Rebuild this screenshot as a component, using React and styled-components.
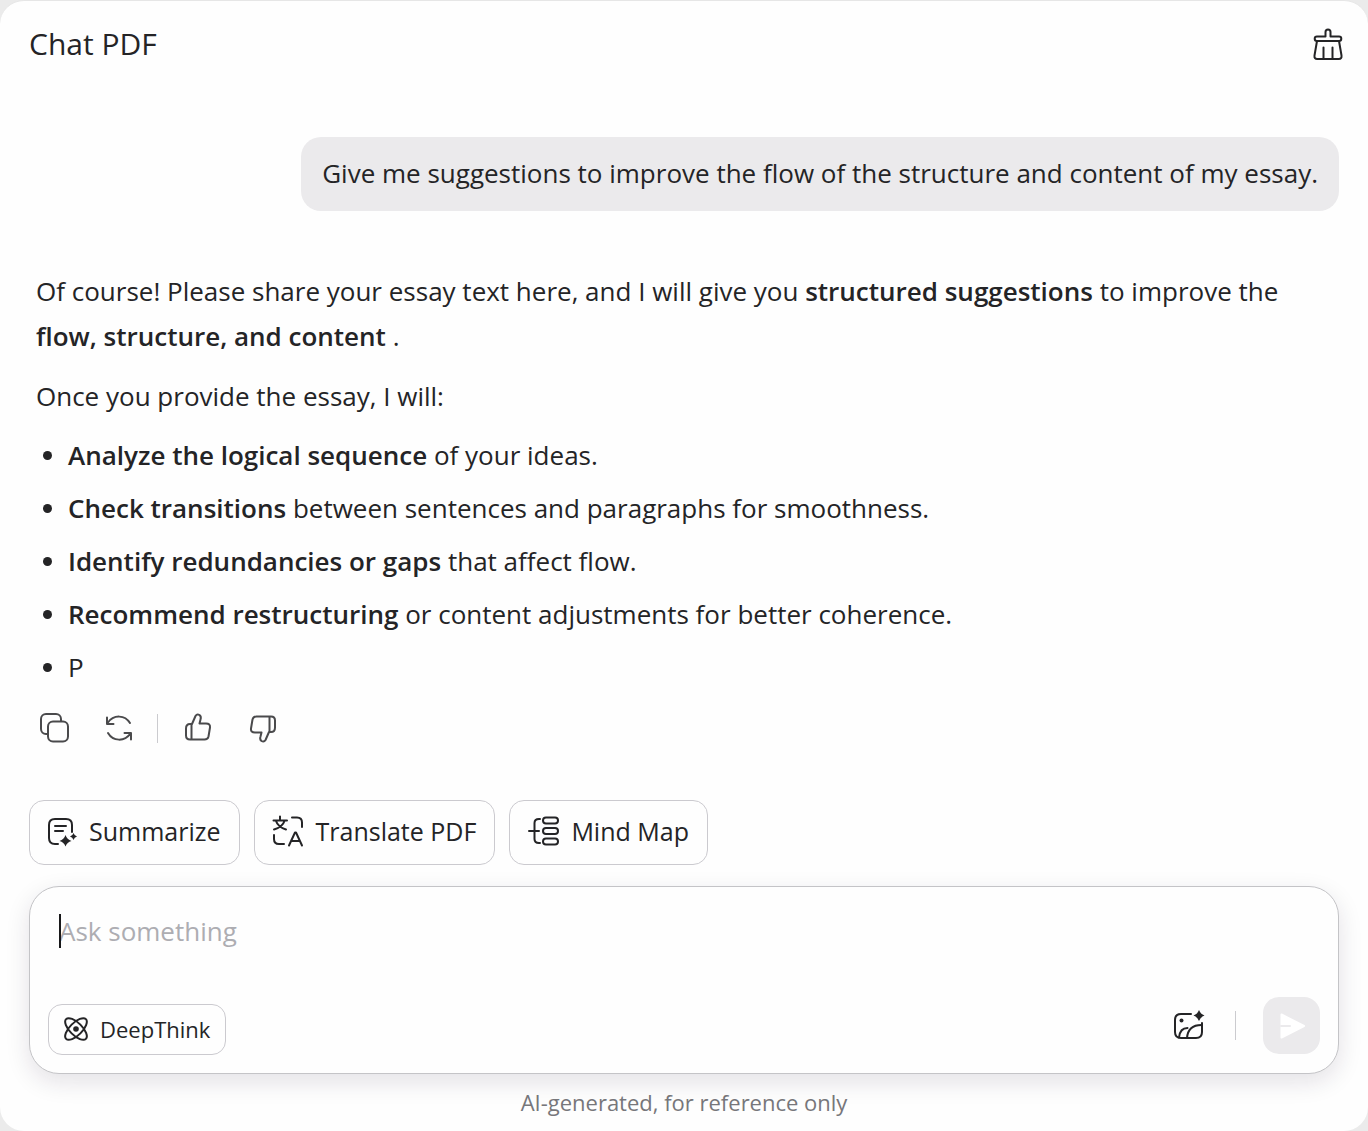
import React, { useState } from "react";
import styled, { createGlobalStyle } from "styled-components";

const GlobalStyle = createGlobalStyle`
  * {
    box-sizing: border-box;
  }
  body {
    margin: 0;
    background: #ebebeb;
    color: #242426;
    font-family: "Open Sans", "Noto Sans", sans-serif;
  }
  button, textarea {
    font-family: inherit;
    color: inherit;
  }
`;

/**
 * Panel
 */
const Panel = styled.div`
  display: flex;
  flex-direction: column;
  min-height: 100vh;
  padding: 0 29px;
  background: #fefefe;
  border-top: 1px solid #e6e6e6;
  border-radius: 24px;
`;

const Header = styled.header`
  display: flex;
  align-items: center;
  justify-content: space-between;
  height: 86px;
  margin-right: -5px;
`;

const Title = styled.h1`
  margin: 0;
  font-size: 30px;
  font-weight: 400;
  line-height: 40px;
`;

const IconButton = styled.button`
  display: flex;
  align-items: center;
  justify-content: center;
  width: 32px;
  height: 32px;
  padding: 0;
  border: none;
  background: none;
  color: ${(props) => props.$color || "#4a4a4c"};
  cursor: pointer;
`;

/**
 * Conversation
 */
const Messages = styled.main`
  display: flex;
  flex: 1;
  flex-direction: column;
`;

const Question = styled.div`
  align-self: flex-end;
  margin-top: 50px;
  padding: 14px 21px 16px;
  border-radius: 20px;
  background: #ebeaec;
  font-size: 26px;
  line-height: 44px;
`;

const Answer = styled.div`
  margin-top: 58px;
  padding: 0 7px;
  font-size: 26px;
  line-height: 45px;
  p {
    margin: 0 0 15px;
  }
  strong {
    font-weight: 650;
  }
`;

const Points = styled.ul`
  display: flex;
  flex-direction: column;
  gap: 8px;
  margin: -1px 0 0;
  padding: 0;
  list-style: none;
`;

const Point = styled.li`
  display: flex;
  align-items: center;
  gap: 16px;
  &::before {
    content: "";
    width: 9px;
    height: 9px;
    margin-left: 7px;
    border-radius: 50%;
    background: #242426;
  }
`;

const Feedback = styled.div`
  display: flex;
  align-items: center;
  gap: 33px;
  margin-top: 22px;
  padding-left: 9px;
`;

const FeedbackGroup = styled.div`
  display: flex;
  gap: 33px;
`;

const Divider = styled.span`
  width: 1px;
  height: 29px;
  background: #cbcbcf;
  margin: ${(props) => props.$margin || "0"};
`;

/**
 * Composer
 */
const Actions = styled.div`
  display: flex;
  flex-wrap: wrap;
  gap: 14px;
`;

const ActionButton = styled.button`
  display: flex;
  align-items: center;
  gap: 12px;
  height: 65px;
  padding: 0 18px 3px 17px;
  border: 1px solid #cbcacf;
  border-radius: 15px;
  background: #fefefe;
  font-size: 25px;
  cursor: pointer;
`;

const Composer = styled.form`
  position: relative;
  display: flex;
  flex-direction: column;
  justify-content: space-between;
  min-height: 188px;
  margin-top: 21px;
  padding: 21px 18px 18px;
  border: 1px solid #c4c4c7;
  border-radius: 30px;
  background: #fefefe;
  box-shadow: 0 8px 24px rgba(30, 20, 50, 0.12);
`;

const Prompt = styled.textarea`
  height: 46px;
  margin: 0 11px;
  padding: 0;
  border: none;
  outline: none;
  resize: none;
  background: none;
  font-size: 26px;
  line-height: 46px;
  caret-color: transparent;
  &::placeholder {
    color: #adadb2;
    opacity: 1;
  }
`;

const Caret = styled.span`
  position: absolute;
  top: 27px;
  left: 29px;
  width: 2px;
  height: 34px;
  background: #18181a;
`;

const Tools = styled.div`
  display: flex;
  align-items: flex-end;
  justify-content: space-between;
`;

const ToolGroup = styled.div`
  display: flex;
  align-items: center;
  padding-bottom: 1px;
`;

const DeepThinkButton = styled.button`
  display: flex;
  align-items: center;
  gap: 12px;
  height: 51px;
  padding: 0 15px 2px;
  border: 1px solid #cbcacf;
  border-radius: 14px;
  background: #fefefe;
  font-size: 22px;
  cursor: pointer;
`;

const SendButton = styled.button`
  display: flex;
  align-items: center;
  justify-content: center;
  width: 57px;
  height: 57px;
  padding: 0;
  border: none;
  border-radius: 16px;
  background: #ebeaec;
`;

const Note = styled.footer`
  padding: 12px 0 13px;
  color: #77777b;
  font-size: 22px;
  line-height: 32px;
  text-align: center;
`;

/**
 * Icons
 */
const Icon = ({ size = 32, stroke = 2, children }) => (
  <svg
    width={size}
    height={size}
    viewBox={`0 0 ${size} ${size}`}
    fill="none"
    stroke="currentColor"
    strokeWidth={stroke}
    strokeLinecap="round"
    strokeLinejoin="round"
    overflow="visible"
    aria-hidden="true"
  >
    {children}
  </svg>
);

const BroomIcon = () => (
  <Icon>
    <path d="M13.500 8.500V4a2.500 2.500 0 0 1 5 0v4.500H27a2.300 2.300 0 0 1 0 4.600H5a2.300 2.300 0 0 1 0-4.600z" />
    <path d="M5 13 2.500 27.500q-.4 3.500 2.700 3.500h21.600q3.100 0 2.700-3.500L27 13" />
    <path d="M11.500 19.500v11M20.500 19.500v11" />
  </Icon>
);

const CopyIcon = () => (
  <Icon>
    <path d="M9 22H8a5 5 0 0 1-5-5V7a5 5 0 0 1 5-5h10a5 5 0 0 1 5 5v2" />
    <rect x="10" y="9.500" width="20" height="20" rx="5" />
  </Icon>
);

const RefreshIcon = () => (
  <Icon>
    <path d="M27 11C22 3 11 2 4.500 11M4 5.500V12h6.500" />
    <path d="M5 21C10 29.500 21.500 30 27.500 21.500M28 27.500V21h-6.500" />
  </Icon>
);

const LikeIcon = () => (
  <Icon>
    <path d="M9 12h1l3.500-8Q15 1.500 17.500 3q2 1.500 1 4.500l-1 4H24q4.500 0 4 4l-1.500 9q-.7 3-4 3H8q-4 0-4-4v-7Q4 12 8 12zM9.500 12.500V27" />
  </Icon>
);

const DislikeIcon = () => (
  <Icon>
    <path d="M23 20h-1l-3.500 8q-1.500 2.500-4 1-2-1.500-1-4.500l1-4H8q-4.500 0-4-4l1.500-9q.7-3 4-3H24q4 0 4 4v7q0 4.500-4 4.500zM22.500 19.500V5" />
  </Icon>
);

const SummarizeIcon = () => (
  <Icon size={30}>
    <path d="M11 28H8q-6 0-6-6V9q0-6 6-6h11q6 0 6 6v7M8 10h11M8 15h8" />
    <path
      d="M18.500 19q1.500 4.500 6 6-4.500 1-6 5.500-1.500-4.500-6-5.500 4.500-1.500 6-6zM26.500 17q.8 2.700 3.500 3.500-2.700.8-3.500 3.500-.8-2.700-3.500-3.500 2.700-.8 3.500-3.500z"
      fill="currentColor"
      strokeWidth="0"
    />
  </Icon>
);

const TranslateIcon = () => (
  <Icon size={32}>
    <path d="M8 1.500V5M1.500 5.500h13.500M4 6q2 6 10 8.500M12.500 6q-2 6-10.500 8.500" />
    <path d="M20 2.500h5q5 0 5 5V12M2 20v4q0 5 5 5h5M17 30.500l6-13h1l6 13M19.500 26h8" />
  </Icon>
);

const MindMapIcon = () => (
  <Icon size={32}>
    <path d="M2 16h10M13 4h-1q-4.500 0-4.500 4v16q0 4 4.500 4h1" />
    <rect x="16" y="2.500" width="15" height="6" rx="3" />
    <rect x="16" y="13" width="15" height="6" rx="3" />
    <rect x="16" y="23.500" width="15" height="6" rx="3" />
  </Icon>
);

const AtomIcon = () => (
  <Icon size={24}>
    <ellipse cx="12" cy="12" rx="14" ry="6.200" transform="rotate(45 12 12)" />
    <ellipse cx="12" cy="12" rx="14" ry="6.200" transform="rotate(-45 12 12)" />
    <circle cx="12" cy="12" r="2.800" fill="currentColor" stroke="none" />
  </Icon>
);

const ImageIcon = () => (
  <Icon>
    <path d="M18 4H8Q2 4 2 10v12q0 6 6 6h15q6 0 6-6V13" />
    <path d="M6 27.500q1-9.500 8.500-9.500M14 28q1-13 14.500-13" />
    <circle cx="8.500" cy="10.500" r="2" fill="currentColor" stroke="none" />
    <path
      d="M26 0q1.500 4 5.500 5.500-4 1.500-5.500 5.500-1.500-4-5.500-5.500 4-1.500 5.500-5.500z"
      fill="currentColor"
      stroke="none"
    />
  </Icon>
);

const SendIcon = () => (
  <Icon size={30}>
    <path d="M4.500 3.500 27 15 4.500 26.500V17z" fill="#fff" stroke="#fff" />
    <path d="M4 15h9" stroke="#ebeaec" />
  </Icon>
);

const points = [
  { lead: "Analyze the logical sequence", rest: " of your ideas." },
  { lead: "Check transitions", rest: " between sentences and paragraphs for smoothness." },
  { lead: "Identify redundancies or gaps", rest: " that affect flow." },
  { lead: "Recommend restructuring", rest: " or content adjustments for better coherence." },
  { lead: "", rest: "P" },
];

const App = () => {
  const [prompt, setPrompt] = useState("");

  return (
    <Panel>
      <GlobalStyle />
      <Header>
        <Title>Chat PDF</Title>
        <IconButton aria-label="Clear chat" $color="#242426">
          <BroomIcon />
        </IconButton>
      </Header>

      <Messages>
        <Question>Give me suggestions to improve the flow of the structure and content of my essay.</Question>
        <Answer>
          <p>
            Of course! Please share your essay text here, and I will give you{" "}
            <strong>structured suggestions</strong> to improve the{" "}
            <strong>flow, structure, and content</strong> .
          </p>
          <p>Once you provide the essay, I will:</p>
          <Points>
            {points.map((point) => (
              <Point key={point.rest}>
                <span>
                  {point.lead && <strong>{point.lead}</strong>}
                  {point.rest}
                </span>
              </Point>
            ))}
          </Points>
        </Answer>
        <Feedback>
          <FeedbackGroup>
            <IconButton aria-label="Copy"><CopyIcon /></IconButton>
            <IconButton aria-label="Regenerate"><RefreshIcon /></IconButton>
          </FeedbackGroup>
          <Divider $margin="0 -9px 0 -11px" />
          <FeedbackGroup>
            <IconButton aria-label="Like"><LikeIcon /></IconButton>
            <IconButton aria-label="Dislike"><DislikeIcon /></IconButton>
          </FeedbackGroup>
        </Feedback>
      </Messages>

      <Actions>
        <ActionButton><SummarizeIcon />Summarize</ActionButton>
        <ActionButton><TranslateIcon />Translate PDF</ActionButton>
        <ActionButton><MindMapIcon />Mind Map</ActionButton>
      </Actions>

      <Composer onSubmit={(e) => e.preventDefault()}>
        <Prompt
          aria-label="Ask something"
          placeholder="Ask something"
          rows={1}
          value={prompt}
          onChange={(e) => setPrompt(e.target.value)}
        />
        {!prompt && <Caret />}
        <Tools>
          <DeepThinkButton type="button"><AtomIcon />DeepThink</DeepThinkButton>
          <ToolGroup>
            <IconButton type="button" aria-label="Add image" $color="#242426"><ImageIcon /></IconButton>
            <Divider $margin="0 27px 0 30px" />
            <SendButton aria-label="Send" disabled={!prompt}><SendIcon /></SendButton>
          </ToolGroup>
        </Tools>
      </Composer>
      <Note>AI-generated, for reference only</Note>
    </Panel>
  );
};

export default App;
